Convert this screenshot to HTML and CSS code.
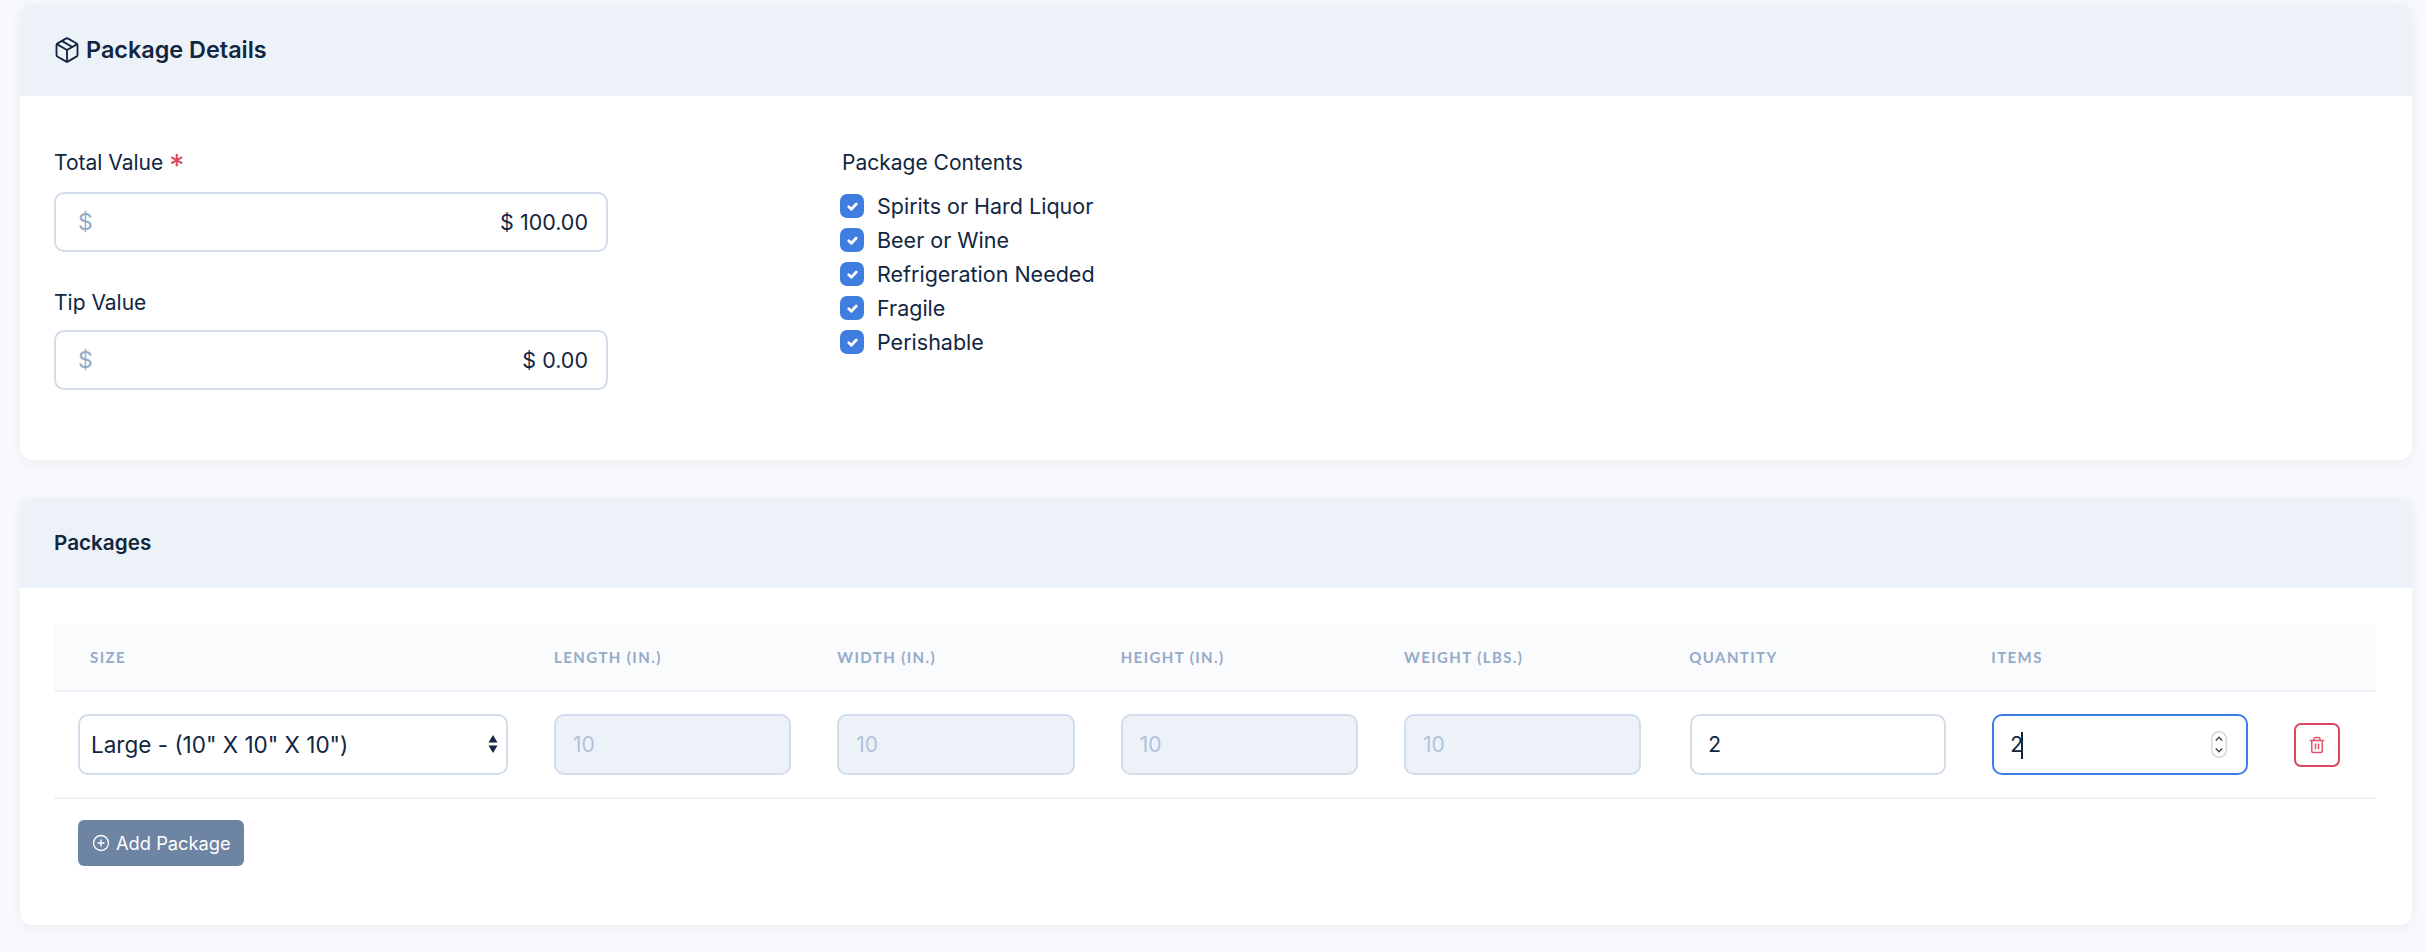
FILE: index.html
```html
<!DOCTYPE html>
<html lang="en">
<head>
<meta charset="utf-8">
<title>Package Details</title>
<link rel="stylesheet" href="styles.css">
</head>
<body>
<section class="card card-details">
  <header class="card-header">
    <svg class="icon-package" viewBox="0 0 24 24"><path d="M16.5 9.4 7.5 4.21"/><path d="M21 16V8a2 2 0 0 0-1-1.73l-7-4a2 2 0 0 0-2 0l-7 4A2 2 0 0 0 3 8v8a2 2 0 0 0 1 1.73l7 4a2 2 0 0 0 2 0l7-4A2 2 0 0 0 21 16z"/><path d="M3.27 6.96 12 12.01l8.73-5.05"/><path d="M12 22.08V12"/></svg>
    <h2>Package Details</h2>
  </header>
  <div class="details-body">
    <div class="values">
      <div class="field">
        <label class="field-label field-label-req">Total Value <span class="req">*</span></label>
        <div class="money"><span class="money-sign">$</span><input class="input money-input" value="$ 100.00"></div>
      </div>
      <div class="field">
        <label class="field-label">Tip Value</label>
        <div class="money"><span class="money-sign">$</span><input class="input money-input" value="$ 0.00"></div>
      </div>
    </div>
    <div class="contents">
      <div class="contents-title">Package Contents</div>
      <ul class="checks">
        <li class="check"><span class="box"><svg viewBox="0 0 12 12"><path d="M3 6.2 5.1 8.2 9 4"/></svg></span>Spirits or Hard Liquor</li>
        <li class="check"><span class="box"><svg viewBox="0 0 12 12"><path d="M3 6.2 5.1 8.2 9 4"/></svg></span>Beer or Wine</li>
        <li class="check"><span class="box"><svg viewBox="0 0 12 12"><path d="M3 6.2 5.1 8.2 9 4"/></svg></span>Refrigeration Needed</li>
        <li class="check"><span class="box"><svg viewBox="0 0 12 12"><path d="M3 6.2 5.1 8.2 9 4"/></svg></span>Fragile</li>
        <li class="check"><span class="box"><svg viewBox="0 0 12 12"><path d="M3 6.2 5.1 8.2 9 4"/></svg></span>Perishable</li>
      </ul>
    </div>
  </div>
</section>

<section class="card card-packages">
  <header class="card-header card-header-sm">
    <h2 class="title-sm">Packages</h2>
  </header>
  <div class="packages-body">
    <table class="table">
      <colgroup>
        <col class="c-size"><col class="c-dim"><col class="c-dim"><col class="c-dim"><col class="c-dim"><col class="c-qty"><col class="c-qty"><col>
      </colgroup>
      <thead>
        <tr>
          <th class="th-first">Size</th>
          <th>Length (in.)</th>
          <th>Width (in.)</th>
          <th>Height (in.)</th>
          <th>Weight (lbs.)</th>
          <th class="th-qty">Quantity</th>
          <th class="th-qty">Items</th>
          <th></th>
        </tr>
      </thead>
      <tbody>
        <tr>
          <td>
            <div class="select-wrap">
              <select class="input select"><option>Large - (10" X 10" X 10")</option></select>
              <svg class="select-arrows" viewBox="0 0 10 20"><path d="M5 1 9.500 8.500H.5z"/><path d="M5 19 .5 11.500h9z"/></svg>
            </div>
          </td>
          <td><input class="input" value="10" disabled></td>
          <td><input class="input" value="10" disabled></td>
          <td><input class="input" value="10" disabled></td>
          <td><input class="input" value="10" disabled></td>
          <td class="cell-qty"><input class="input" value="2"></td>
          <td class="cell-qty">
            <div class="focus-wrap">
              <input class="input input-focus" value="2">
              <span class="caret"></span>
              <svg class="spinner" viewBox="0 0 16 27"><rect x=".75" y=".75" width="14.500" height="25.500" rx="7.250"/><path class="chev" d="M4.800 9.500 8 6.300l3.200 3.200"/><path class="chev" d="M4.800 17.500 8 20.700l3.200-3.200"/></svg>
            </div>
          </td>
          <td class="cell-action">
            <button class="btn-delete" type="button" aria-label="Delete">
              <svg viewBox="0 0 24 24"><path d="M3 6h18"/><path d="M19 6v14a2 2 0 0 1-2 2H7a2 2 0 0 1-2-2V6m3 0V4a2 2 0 0 1 2-2h4a2 2 0 0 1 2 2v2"/><path d="M10 11v6"/><path d="M14 11v6"/></svg>
            </button>
          </td>
        </tr>
      </tbody>
    </table>
    <button class="btn-add" type="button">
      <svg viewBox="0 0 24 24"><circle cx="12" cy="12" r="10"/><path d="M12 8v8"/><path d="M8 12h8"/></svg>
      Add Package
    </button>
  </div>
</section>
</body>
</html>
```
FILE: styles.css
```css
* { box-sizing: border-box; }
html, body { margin: 0; }
body {
  background: #f7f9fc;
  color: #12263f;
  font-family: "Inter", "Liberation Sans", sans-serif;
  font-size: 21px;
  padding: 4px 14px 0 20px;
  height: 952px;
  overflow: hidden;
}
.card {
  background: #fff;
  border-radius: 12px;
  box-shadow: 0 3px 14px rgba(18, 38, 63, .05);
  overflow: hidden;
}
.card-details { height: 456px; margin-bottom: 38px; }
.card-packages { height: 427px; }
.card-header {
  background: #edf2f9;
  height: 92px;
  padding: 0 34px;
  display: flex;
  align-items: center;
  gap: 5px;
}
.card-header-sm { height: 90px; }
.card-header h2 {
  margin: 0;
  font-size: 23.400px;
  font-weight: 600;
  line-height: 30px;
}
.card-header .title-sm { font-size: 20.700px; }
.icon-package {
  width: 28px;
  height: 28px;
  margin-left: -1px;
  fill: none;
  stroke: #12263f;
  stroke-width: 1.600;
  stroke-linecap: round;
  stroke-linejoin: round;
}
.details-body {
  display: flex;
  padding: 54px 34px 0;
}
.values { width: 554px; margin-right: 234px; }
.field { margin-bottom: 38px; }
.field-label { display: block; height: 26px; line-height: 26px; margin-bottom: 14px; }
.field-label-req { margin-bottom: 16px; }
.req {
  color: #e0435c;
  font-size: 30px;
  line-height: 20px;
  vertical-align: -6px;
}
.input {
  display: block;
  width: 100%;
  height: 61px;
  border: 2px solid #d2ddec;
  border-radius: 10px;
  background: #fff;
  color: #12263f;
  font: inherit;
  padding: 0 17px;
  outline: none;
}
.input:disabled { background: #edf2f9; color: #b1c2d9; opacity: 1; }
.money { position: relative; }
.money-sign {
  position: absolute;
  left: 24px;
  top: 15px;
  color: #95aac9;
  font-size: 23px;
  line-height: 30px;
}
.money .money-input { height: 60px; text-align: right; padding-right: 18px; font-size: 21.500px; }
.contents-title { height: 26px; line-height: 26px; margin-bottom: 13px; }
.checks { list-style: none; margin: 0 0 0 -2px; padding: 0; font-size: 21.500px; }
.check {
  display: flex;
  align-items: center;
  height: 34px;
  gap: 13px;
}
.box {
  width: 24px;
  height: 24px;
  border-radius: 7px;
  background: #3f7de0;
  display: flex;
  align-items: center;
  justify-content: center;
}
.box svg {
  width: 15px;
  height: 15px;
  fill: none;
  stroke: #fff;
  stroke-width: 2.200;
  stroke-linecap: round;
  stroke-linejoin: round;
}
.packages-body { padding: 36px 34px 0; }
.table {
  width: 2322px;
  border-collapse: collapse;
  table-layout: fixed;
}
.c-size { width: 477px; }
.c-dim { width: 283.330px; }
.c-qty { width: 302px; }
.table th {
  background: #f9fbfd;
  color: #95aac9;
  font-family: "Lato", "Liberation Sans", sans-serif;
  font-size: 15px;
  font-weight: 700;
  letter-spacing: 1.400px;
  text-transform: uppercase;
  text-align: left;
  height: 67px;
  padding: 0 23px;
  border-bottom: 2px solid #edf2f9;
}
.table .th-first { padding-left: 36px; }
.table .th-qty { padding-left: 25px; padding-right: 20px; }
.table td {
  padding: 22px 23px;
  border-bottom: 2px solid #edf2f9;
  vertical-align: middle;
}
.table td:first-child { padding-left: 24px; }
.table .cell-qty { padding-left: 26px; padding-right: 20px; }
.cell-qty .input { padding-left: 16px; }
.table .cell-action { padding-left: 26px; padding-right: 0; }
.select-wrap, .focus-wrap { position: relative; }
.select { appearance: none; padding-left: 11px; font-size: 22.500px; }
.select-arrows {
  position: absolute;
  right: 10px;
  top: 20px;
  width: 10px;
  height: 20px;
  fill: #12263f;
}
.input-focus { border-color: #3f7de0; }
.caret {
  position: absolute;
  left: 29px;
  top: 18px;
  width: 2px;
  height: 27px;
  background: #12263f;
}
.spinner {
  position: absolute;
  right: 21px;
  top: 17px;
  width: 16px;
  height: 27px;
  fill: #fff;
  stroke: #d6d6d6;
  stroke-width: 1.500;
}
.spinner .chev { fill: none; stroke: #4a4a4a; stroke-width: 1.600; }
.btn-delete {
  width: 46px;
  height: 44px;
  border: 2px solid #d9485f;
  border-radius: 7px;
  background: #fff;
  padding: 0;
  display: flex;
  align-items: center;
  justify-content: center;
}
.btn-delete svg {
  width: 18px;
  height: 18px;
  fill: none;
  stroke: #e0566c;
  stroke-width: 2;
  stroke-linecap: round;
  stroke-linejoin: round;
}
.btn-add {
  margin: 21px 0 0 24px;
  width: 166px;
  height: 46px;
  border: 0;
  border-radius: 6px;
  background: #6e84a3;
  color: #fff;
  font: inherit;
  font-size: 18.300px;
  display: flex;
  align-items: center;
  gap: 6px;
  padding: 0 0 0 14px;
}
.btn-add svg {
  width: 18px;
  height: 18px;
  flex: none;
  fill: none;
  stroke: #fff;
  stroke-width: 1.800;
  stroke-linecap: round;
  stroke-linejoin: round;
}
```
